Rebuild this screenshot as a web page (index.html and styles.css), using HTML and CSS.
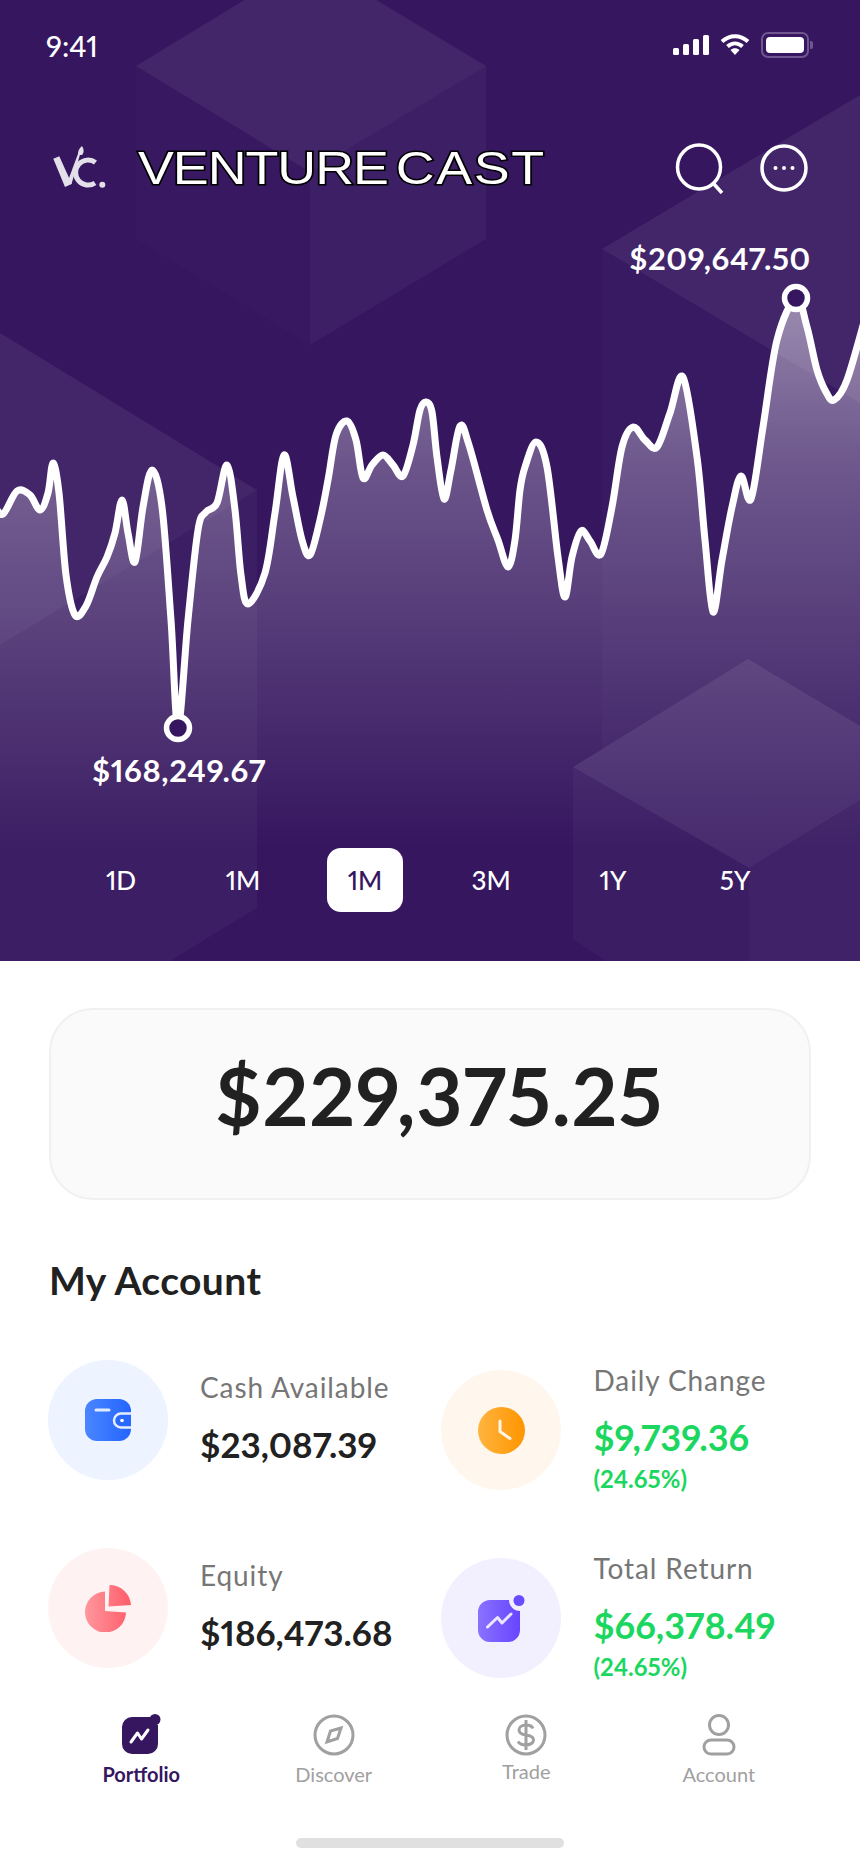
FILE: index.html
```html
<!DOCTYPE html>
<html>
<head>
<meta charset="utf-8">
<title>Venture Cast</title>
<link rel="stylesheet" href="styles.css">
</head>
<body>
<div class="screen">
  <section class="hero">
    <svg class="hero-bg" viewBox="0 0 860 961">
      <polygon fill-opacity=".07" points="136,66 310,-40 486,66 310,172"/>
      <polygon fill-opacity=".015" points="136,66 310,172 310,345 136,239"/>
      <polygon fill-opacity=".04" points="310,172 486,66 486,239 310,345"/>
      <polygon fill-opacity=".07" points="0,333 257,490 0,645"/>
      <polygon fill-opacity=".035" points="0,645 257,490 257,908 170,961 0,961"/>
      <polygon fill-opacity=".07" points="602,249 860,95 860,403"/>
      <polygon fill-opacity=".02" points="602,249 860,403 860,961 606,961 573,939 573,767 602,750"/>
      <polygon fill-opacity=".08" points="573,767 748,659 860,726 860,800 749,868"/>
      <polygon fill-opacity=".015" points="573,767 749,868 749,961 606,961 573,939"/>
      <polygon fill-opacity=".035" points="749,868 860,800 860,961 749,961"/>
    </svg>

    <div class="status-bar">
      <span class="status-time">9:41</span>
      <div class="status-icons">
        <svg width="36" height="20" viewBox="0 0 36 20">
          <rect x="0" y="13" width="6" height="7" rx="1.5"/>
          <rect x="10" y="9" width="6" height="11" rx="1.5"/>
          <rect x="20" y="4" width="6" height="16" rx="1.5"/>
          <rect x="30" y="0" width="6" height="20" rx="1.5"/>
        </svg>
        <svg width="30" height="22" viewBox="0 0 30 22">
          <path class="wifi-arc" d="M2 7.500C10 .5 20 .5 28 7.500"/>
          <path class="wifi-arc" d="M7.500 12.500C12 8.500 18 8.500 22.500 12.500"/>
          <path d="M10.500 16C13 13.700 17 13.700 19.500 16L15 21z"/>
        </svg>
        <div class="battery"><div class="battery-level"></div></div>
      </div>
    </div>

    <div class="topbar">
      <svg class="logo" width="56" height="46" viewBox="52 148 56 46">
        <polygon points="53.3,161.7 59.3,159.3 71.7,186.7 65,190"/>
        <polygon points="66,189 71.5,187 80.5,156 78.5,155.5"/>
        <path d="M78 158C77.500 154 79.500 151 82 149C83.800 152 84.500 155 82 158z"/>
        <path class="logo-c" d="M95.500 165.500A12.500 12.500 0 1 0 95 186"/>
        <circle cx="102.300" cy="187.700" r="3"/>
      </svg>
      <h1 class="brand"><span class="brand-first">VENTURE</span> <span class="brand-last">CAST</span></h1>
      <div class="topbar-actions">
        <svg width="50" height="52" viewBox="0 0 50 52">
          <ellipse class="line-icon" cx="24" cy="25" rx="21.500" ry="22"/>
          <path class="line-icon" d="M38 41l9 10"/>
        </svg>
        <svg width="48" height="48" viewBox="0 0 48 48">
          <circle class="line-icon" cx="24" cy="24" r="22"/>
          <circle cx="15.500" cy="24" r="2"/>
          <circle cx="24" cy="24" r="2"/>
          <circle cx="32.500" cy="24" r="2"/>
        </svg>
      </div>
    </div>

    <div class="chart">
      <svg viewBox="0 246 860 602">
        <defs>
          <linearGradient id="areaFade" gradientUnits="userSpaceOnUse" x1="0" y1="298" x2="0" y2="850">
            <stop offset="0" stop-color="#fff" stop-opacity=".46"/>
            <stop offset=".3" stop-color="#fff" stop-opacity=".27"/>
            <stop offset="1" stop-color="#fff" stop-opacity="0"/>
          </linearGradient>
        </defs>
        <path id="chartArea" fill="url(#areaFade)"/>
        <path id="chartLine" class="chart-line"/>
        <circle class="chart-dot" cx="178" cy="728" r="11.500"/>
        <circle class="chart-dot" cx="796" cy="298" r="11.500"/>
        <text class="chart-label" x="720" y="270" text-anchor="middle">$209,647.50</text>
        <text class="chart-label" x="179" y="782" text-anchor="middle">$168,249.67</text>
      </svg>
    </div>

    <div class="ranges">
      <span class="range">1D</span>
      <span class="range">1M</span>
      <span class="range range-active">1M</span>
      <span class="range">3M</span>
      <span class="range">1Y</span>
      <span class="range">5Y</span>
    </div>
  </section>

  <main class="content">
    <div class="balance">$229,375.25</div>
    <h2 class="section-title">My Account</h2>

    <div class="stats">
      <div class="stats-col">
        <div class="stat">
          <div class="stat-icon bg-blue">
            <svg width="46" height="42" viewBox="0 0 46 42">
              <defs>
                <linearGradient id="blueFill" x1="0" y1="0" x2="1" y2="0">
                  <stop offset="0" stop-color="#4a86ff"/>
                  <stop offset="1" stop-color="#2465ff"/>
                </linearGradient>
              </defs>
              <rect width="46" height="42" rx="12" fill="url(#blueFill)"/>
              <rect x="9.500" y="9.500" width="16" height="3" rx="1.500" fill="#fff" fill-opacity=".85"/>
              <path d="M46 14.500H36a7 7 0 0 0 0 14h10" fill="#2a69ff" stroke="#e6eeff" stroke-width="2.500"/>
              <circle cx="37" cy="21.500" r="1.800" fill="#fff"/>
            </svg>
          </div>
          <div class="stat-text stat-text-short">
            <div class="stat-label">Cash Available</div>
            <div class="stat-value">$23,087.39</div>
          </div>
        </div>
        <div class="stat">
          <div class="stat-icon bg-red">
            <svg width="46" height="47" viewBox="0 0 46 47">
              <defs>
                <linearGradient id="redFill" gradientUnits="userSpaceOnUse" x1="0" y1="25" x2="46" y2="25">
                  <stop offset="0" stop-color="#ff979e"/>
                  <stop offset="1" stop-color="#ff5c69"/>
                </linearGradient>
              </defs>
              <path d="M20 6.500A20.500 20.500 0 1 0 41 27.500L20 26z" fill="url(#redFill)"/>
              <path d="M24.500 0A21.500 21.500 0 0 1 46 20L23.500 21.500z" fill="url(#redFill)"/>
            </svg>
          </div>
          <div class="stat-text stat-text-short">
            <div class="stat-label">Equity</div>
            <div class="stat-value">$186,473.68</div>
          </div>
        </div>
      </div>

      <div class="stats-col stats-col-right">
        <div class="stat">
          <div class="stat-icon bg-orange">
            <svg width="47" height="47" viewBox="0 0 47 47">
              <defs>
                <linearGradient id="orangeFill" x1="0" y1="0" x2="1" y2="0">
                  <stop offset="0" stop-color="#ffb43f"/>
                  <stop offset="1" stop-color="#ff9500"/>
                </linearGradient>
              </defs>
              <circle cx="23.500" cy="23.500" r="23.500" fill="url(#orangeFill)"/>
              <path d="M22 14v10.500l10 7" fill="none" stroke="#fff" stroke-opacity=".9" stroke-width="3" stroke-linecap="round" stroke-linejoin="round"/>
            </svg>
          </div>
          <div class="stat-text stat-text-tall">
            <div class="stat-label">Daily Change</div>
            <div class="stat-value stat-up">$9,739.36</div>
            <div class="stat-percent">(24.65%)</div>
          </div>
        </div>
        <div class="stat">
          <div class="stat-icon bg-violet">
            <svg width="47" height="47" viewBox="0 0 47 47">
              <defs>
                <linearGradient id="violetFill" x1="0" y1="0" x2="1" y2="0">
                  <stop offset="0" stop-color="#8a72ff"/>
                  <stop offset="1" stop-color="#6745ff"/>
                </linearGradient>
              </defs>
              <path d="M12 5H31a11 11 0 0 0 11 11V35a12 12 0 0 1-12 12H12A12 12 0 0 1 0 35V17A12 12 0 0 1 12 5z" fill="url(#violetFill)"/>
              <circle cx="41" cy="5.500" r="5.500" fill="#6a4bff"/>
              <path d="M9.500 32l10-9.500 4.500 5.500 9-9" fill="none" stroke="#fff" stroke-opacity=".85" stroke-width="3" stroke-linecap="round" stroke-linejoin="round"/>
            </svg>
          </div>
          <div class="stat-text stat-text-tall">
            <div class="stat-label">Total Return</div>
            <div class="stat-value stat-up">$66,378.49</div>
            <div class="stat-percent">(24.65%)</div>
          </div>
        </div>
      </div>
    </div>
  </main>

  <nav class="tabbar">
    <a class="tab tab-active">
      <svg width="42" height="42" viewBox="0 0 42 42">
        <path d="M12 3H31a8 8 0 0 0 7 8V30a10 10 0 0 1-10 10H12A10 10 0 0 1 2 30V13A10 10 0 0 1 12 3z" fill="#35165f"/>
        <circle cx="35" cy="5.500" r="5.500" fill="#35165f"/>
        <path d="M11 28l6.500-9 4 6 6.500-9" fill="none" stroke="#fff" stroke-width="3" stroke-linecap="round" stroke-linejoin="round"/>
      </svg>
      <span>Portfolio</span>
    </a>
    <a class="tab">
      <svg width="42" height="42" viewBox="0 0 42 42">
        <circle class="tab-stroke" cx="21" cy="21" r="19"/>
        <path class="tab-stroke" d="M14 28l3.500-11L28 14l-3.500 10.500z"/>
      </svg>
      <span>Discover</span>
    </a>
    <a class="tab tab-raised">
      <svg width="42" height="42" viewBox="0 0 42 42">
        <circle class="tab-stroke" cx="21" cy="21" r="19"/>
        <path class="tab-stroke" d="M28 14.500c-1-2.500-4-3.500-7-3.500-4 0-7 2-7 5s3 4.500 7 5 7.500 2 7.500 5-3.500 5-7.500 5c-3.500 0-6.500-1-8-3.500M21 6v30"/>
      </svg>
      <span>Trade</span>
    </a>
    <a class="tab">
      <svg width="42" height="42" viewBox="0 0 42 42">
        <circle class="tab-stroke" cx="21" cy="11" r="9.500"/>
        <rect class="tab-stroke" x="6" y="26" width="30" height="14" rx="7"/>
      </svg>
      <span>Account</span>
    </a>
  </nav>
  <div class="home-indicator"></div>
</div>
<script src="chart.js"></script>
</body>
</html>
```

FILE: styles.css
```css
* {
  box-sizing: border-box;
}

body {
  margin: 0;
  background-color: #fff;
  font-family: "Lato", "Liberation Sans", sans-serif;
  font-variant-numeric: proportional-nums;
  color: #212121;
}

.screen {
  width: 860px;
  height: 1864px;
  display: flex;
  flex-direction: column;
  overflow: hidden;
}

/* top purple part */
.hero {
  position: relative;
  height: 961px;
  flex: none;
  background-color: #35165f;
  color: #fff;
  overflow: hidden;
}

.hero-bg {
  position: absolute;
  left: 0;
  top: 0;
  width: 860px;
  height: 961px;
  fill: #fff;
}

.status-bar {
  position: relative;
  height: 90px;
  padding: 0 51px 0 46px;
  display: flex;
  justify-content: space-between;
  align-items: center;
}

.status-time {
  font-size: 29px;
  font-weight: 500;
}

.status-icons {
  display: flex;
  align-items: center;
  gap: 11px;
  fill: #fff;
}

.wifi-arc {
  fill: none;
  stroke: #fff;
  stroke-width: 4;
}

.battery {
  position: relative;
  width: 48px;
  height: 26px;
  padding: 3px;
  border: 2px solid #6f5690;
  border-radius: 7px;
}

.battery::after {
  content: "";
  position: absolute;
  right: -6px;
  top: 7px;
  width: 3px;
  height: 8px;
  background-color: #6f5690;
  border-radius: 0 2px 2px 0;
}

.battery-level {
  height: 100%;
  background-color: #fff;
  border-radius: 4px;
}

.topbar {
  position: relative;
  height: 156px;
  padding: 0 52px 0 52px;
  display: flex;
  align-items: center;
}

.logo {
  flex: none;
  fill: #e4e0ea;
}

.logo-c {
  fill: none;
  stroke: #e4e0ea;
  stroke-width: 5;
}

.brand {
  margin: 0 0 0 30px;
  font-size: 46px;
  font-weight: 400;
  line-height: 1;
  white-space: nowrap;
  word-spacing: -6px;
  font-family: "Liberation Sans", sans-serif;
  color: #fff;
  -webkit-text-stroke: 3px #000;
  paint-order: stroke fill;
  transform: scaleX(1.17);
  transform-origin: left center;
}

.brand-first {
  letter-spacing: -.9px;
}

.brand-last {
  letter-spacing: 1.4px;
}

.topbar-actions {
  margin-left: auto;
  display: flex;
  align-items: center;
  gap: 35px;
  fill: #fff;
}

.line-icon {
  fill: none;
  stroke: #fff;
  stroke-width: 3.500;
}

.chart {
  position: relative;
  height: 602px;
}

.chart svg {
  display: block;
  width: 860px;
  height: 602px;
  overflow: visible;
}

.chart-line {
  fill: none;
  stroke: #fff;
  stroke-width: 7;
  stroke-linejoin: round;
}

.chart-dot {
  fill: #35165f;
  stroke: #fff;
  stroke-width: 5.500;
}

.chart-label {
  font-size: 31px;
  font-weight: 700;
  letter-spacing: .6px;
  fill: #fff;
}

.ranges {
  position: relative;
  padding-left: 83px;
  display: flex;
  gap: 46px;
}

.range {
  width: 76px;
  height: 64px;
  display: flex;
  align-items: center;
  justify-content: center;
  font-size: 26px;
  font-weight: 500;
  border-radius: 14px;
}

.range-active {
  margin-right: 4px;
  background-color: #fff;
  color: #35165f;
}

/* white part */
.content {
  flex: 1;
  padding: 47px 49px 0;
}

.balance {
  height: 192px;
  padding: 0 0 18px 18px;
  display: flex;
  align-items: center;
  justify-content: center;
  font-size: 80px;
  font-weight: 700;
  letter-spacing: .8px;
  background-color: #fafafa;
  border: 2px solid #f0f0f0;
  border-radius: 44px;
}

.section-title {
  margin: 56px 0 0;
  font-size: 39px;
  font-weight: 700;
  letter-spacing: .4px;
  line-height: 48px;
}

.stats {
  margin-top: 56px;
  margin-left: -1px;
  display: flex;
}

.stats-col {
  width: 394px;
  display: flex;
  flex-direction: column;
  gap: 68px;
}

.stats-col-right {
  width: 370px;
  margin-top: 10px;
}

.stat {
  height: 120px;
  display: flex;
  align-items: center;
  gap: 32px;
}

.stat-icon {
  flex: none;
  width: 120px;
  height: 120px;
  border-radius: 50%;
  display: flex;
  align-items: center;
  justify-content: center;
}

.bg-blue {
  background-color: #edf3ff;
}

.bg-red {
  background-color: #fff2f2;
}

.bg-orange {
  background-color: #fff7ee;
}

.bg-violet {
  background-color: #f2f0ff;
}

.stat-text-short {
  padding-bottom: 7px;
}

.stat-text-tall {
  padding-bottom: 4px;
}

.stat-label {
  font-size: 28px;
  letter-spacing: .9px;
  line-height: 34px;
  color: #767676;
}

.stat-value {
  margin-top: 20px;
  font-size: 35px;
  font-weight: 700;
  line-height: 40px;
  white-space: nowrap;
}

.stat-up {
  font-size: 36px;
  color: #1bd760;
}

.stat-percent {
  margin-top: 7px;
  font-size: 24px;
  font-weight: 700;
  line-height: 30px;
  color: #1bd760;
}

/* bottom navigation */
.tabbar {
  flex: none;
  padding: 0 45px;
  display: grid;
  grid-template-columns: repeat(4, 1fr);
  height: 124px;
}

.tab {
  display: flex;
  flex-direction: column;
  align-items: center;
  font-size: 20px;
  color: #a0a0a0;
}

.tab svg {
  flex: none;
}

.tab span {
  margin-top: 6px;
  line-height: 24px;
}

.tab-active {
  font-weight: 700;
  color: #35165f;
}

.tab-raised span {
  margin-top: 3px;
}

.tab-stroke {
  fill: none;
  stroke: #a0a0a0;
  stroke-width: 3;
}

.home-indicator {
  flex: none;
  width: 268px;
  height: 10px;
  margin: 0 0 16px 296px;
  background-color: #e0e0e0;
  border-radius: 5px;
}
```

FILE: chart.js
```js
// price line points, read off in page pixels
var points = [
  [-6,505],[3,514],[17,491],[30,495],[40,510],[48,493],[53,463],[59,493],[66,575],[75,615],
  [86,606],[97,577],[107,557],[115,533],[122,500],[128,533],[135,562],[143,507],[152,470],[162,507],
  [171,620],[178,727],[188,620],[198,530],[206,512],[217,503],[227,465],[235,510],[241,575],[248,604],
  [265,573],[275,513],[284,455],[293,497],[302,540],[310,555],[320,520],[328,480],[336,435],[347,421],
  [356,440],[363,478],[372,465],[383,455],[393,465],[403,476],[413,445],[420,410],[426,402],[432,412],
  [437,457],[444,499],[451,470],[460,426],[469,445],[487,510],[498,540],[508,567],[515,540],[520,490],
  [525,467],[536,442],[547,467],[558,557],[565,597],[572,557],[581,531],[590,541],[601,554],[612,507],
  [622,447],[633,427],[645,440],[657,447],[670,413],[683,377],[697,457],[705,540],[713,612],[722,560],
  [732,507],[741,476],[751,499],[763,427],[777,340],[796,298],[807,327],[817,370],[826,392],[834,400],
  [847,380],[866,315]
];

function smoothPath(pts) {
  var d = 'M' + pts[0][0] + ' ' + pts[0][1];
  for (var i = 0; i < pts.length - 1; i++) {
    var p0 = pts[i - 1] || pts[i];
    var p1 = pts[i];
    var p2 = pts[i + 1];
    var p3 = pts[i + 2] || p2;
    var c1x = p1[0] + (p2[0] - p0[0]) / 6;
    var c1y = p1[1] + (p2[1] - p0[1]) / 6;
    var c2x = p2[0] - (p3[0] - p1[0]) / 6;
    var c2y = p2[1] - (p3[1] - p1[1]) / 6;
    d += 'C' + c1x.toFixed(1) + ' ' + c1y.toFixed(1) + ' ' + c2x.toFixed(1) + ' ' + c2y.toFixed(1) + ' ' + p2[0] + ' ' + p2[1];
  }
  return d;
}

var line = smoothPath(points);
document.getElementById('chartLine').setAttribute('d', line);
document.getElementById('chartArea').setAttribute('d', line + 'L866 850L-6 850Z');
```
